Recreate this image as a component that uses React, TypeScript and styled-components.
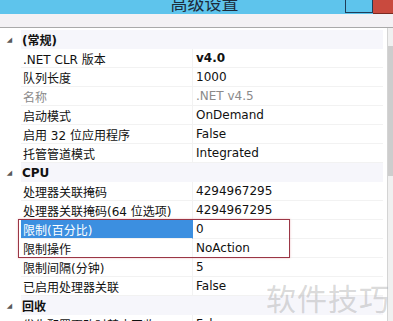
import React, { FC } from "react";
import styled, { createGlobalStyle } from "styled-components";

interface Prop {
  name: string;
  value?: string;
  bold?: boolean;
  dim?: boolean;
  selected?: boolean;
}

interface Section {
  title: string;
  props: Prop[];
}

const sections: Section[] = [
  {
    title: "(常规)",
    props: [
      { name: ".NET CLR 版本", value: "v4.0", bold: true },
      { name: "队列长度", value: "1000" },
      { name: "名称", value: ".NET v4.5", dim: true },
      { name: "启动模式", value: "OnDemand" },
      { name: "启用 32 位应用程序", value: "False" },
      { name: "托管管道模式", value: "Integrated" },
    ],
  },
  {
    title: "CPU",
    props: [
      { name: "处理器关联掩码", value: "4294967295" },
      { name: "处理器关联掩码(64 位选项)", value: "4294967295" },
      { name: "限制(百分比)", value: "0", selected: true },
      { name: "限制操作", value: "NoAction" },
      { name: "限制间隔(分钟)", value: "5" },
      { name: "已启用处理器关联", value: "False" },
    ],
  },
  {
    title: "回收",
    props: [{ name: "发生配置更改时禁止回收", value: "False" }],
  },
];

const GlobalStyle = createGlobalStyle`
  body {
    margin: 0;
    background: #ffffff;
    font-family: "DejaVu Sans", "Noto Sans CJK SC", sans-serif;
    overflow: hidden;
  }
`;

const Row: FC<{ prop: Prop }> = ({ prop }) => (
  <PropRow>
    <Gutter />
    <NameCell $selected={prop.selected} $dim={prop.dim}>
      {prop.name}
    </NameCell>
    <ValueCell $bold={prop.bold} $dim={prop.dim} $selected={prop.selected}>
      {prop.value}
    </ValueCell>
  </PropRow>
);

const App: FC = () => {
  return (
    <Window>
      <GlobalStyle />
      <TitleBar>
        <Title>高级设置</Title>
        <TitleButtons>
          <MaxButton />
          <CloseButton />
        </TitleButtons>
      </TitleBar>
      <Toolbar />
      <Body>
        <Grid>
          {sections.map((s) => {
            const rows = s.props;
            return (
              <React.Fragment key={s.title}>
                <CategoryRow>
                  <Gutter>
                    <Toggle>◢</Toggle>
                  </Gutter>
                  <CategoryTitle>{s.title}</CategoryTitle>
                </CategoryRow>
                {s.title === "CPU" ? (
                  <>
                    {rows.slice(0, 2).map((p) => (
                      <Row key={p.name} prop={p} />
                    ))}
                    <Highlight>
                      {rows.slice(2, 4).map((p) => (
                        <Row key={p.name} prop={p} />
                      ))}
                    </Highlight>
                    {rows.slice(4).map((p) => (
                      <Row key={p.name} prop={p} />
                    ))}
                  </>
                ) : (
                  rows.map((p) => <Row key={p.name} prop={p} />)
                )}
              </React.Fragment>
            );
          })}
        </Grid>
        <Scrollbar>
          <ScrollThumb />
        </Scrollbar>
      </Body>
      <Watermark>软件技巧</Watermark>
    </Window>
  );
};

export default App;

const Window = styled.div`
  position: relative;
  width: 393px;
  height: 321px;
  overflow: hidden;
  background: #ffffff;
`;

const TitleBar = styled.div`
  height: 14px;
  background: #5ec4ec;
  display: flex;
  justify-content: center;
  position: relative;
  overflow: hidden;
`;

const Title = styled.div`
  font-family: "Noto Sans CJK SC", sans-serif;
  font-size: 17px;
  line-height: 17px;
  margin-top: -6px;
  margin-left: 16px;
  color: #1d2b3a;
`;

const TitleButtons = styled.div`
  position: absolute;
  right: 0;
  top: 0;
  display: flex;
  height: 14px;
`;

const MaxButton = styled.div`
  width: 26px;
  height: 12px;
  border: 1px solid #1f3d58;
  border-top: none;
  background: #5ec4ec;
`;

const CloseButton = styled.div`
  width: 20px;
  height: 13px;
  background: #c94a3e;
  border-bottom: 1px solid #7a2a22;
`;

const Toolbar = styled.div`
  height: 13px;
  background: #f3f1f4;
  border-bottom: 1px solid #a9a9a9;
`;

const Body = styled.div`
  display: flex;
  height: 307px;
`;

const Grid = styled.div`
  flex: 1;
  display: flex;
  flex-direction: column;
  padding-top: 2px;
  font-size: 12px;
`;

const PropRow = styled.div`
  display: grid;
  grid-template-columns: 21px 171px 1fr;
  height: 19px;
  align-items: stretch;
`;

const CategoryRow = styled.div`
  display: grid;
  grid-template-columns: 21px 1fr;
  height: 19px;
  background: #f6f6fb;
  margin-right: 4px;
`;

const Gutter = styled.div`
  background: #ffffff;
  display: flex;
  align-items: center;
  justify-content: center;
`;

const Toggle = styled.span`
  font-size: 7px;
  color: #5a5a5a;
  margin-left: -2px;
`;

const CategoryTitle = styled.div`
  font-family: "DejaVu Sans", "Noto Sans CJK SC", sans-serif;
  font-weight: bold;
  color: #111;
  display: flex;
  align-items: center;
  padding-left: 1px;
`;

const NameCell = styled.div<{ $selected?: boolean; $dim?: boolean }>`
  display: flex;
  align-items: center;
  padding-left: 2px;
  white-space: nowrap;
  overflow: hidden;
  color: ${(p) => (p.$selected ? "#ffffff" : p.$dim ? "#8a8a8a" : "#111111")};
  background: ${(p) => (p.$selected ? "#3c8fe0" : "#ffffff")};
  border-bottom: 1px solid #f2f2f2;
`;

const ValueCell = styled.div<{
  $bold?: boolean;
  $dim?: boolean;
  $selected?: boolean;
}>`
  display: flex;
  align-items: center;
  padding-left: 3px;
  margin-right: 4px;
  font-weight: ${(p) => (p.$bold ? "bold" : "normal")};
  color: ${(p) => (p.$dim ? "#8a8a8a" : "#111111")};
  border-left: 1px solid ${(p) => (p.$selected ? "#3c8fe0" : "#f2f2f2")};
  border-bottom: 1px solid #f2f2f2;
`;

const Highlight = styled.div`
  position: relative;

  &::after {
    content: "";
    position: absolute;
    left: 18px;
    top: -1px;
    width: 270px;
    bottom: 0;
    border: 1px solid #9b3645;
    box-shadow: 0 0 2px rgba(220, 120, 130, 0.5);
    pointer-events: none;
  }
`;

const Scrollbar = styled.div`
  width: 5px;
  border-left: 1px solid #d4d4d4;
  background: #f0f0f0;
  display: flex;
  flex-direction: column;
`;

const ScrollThumb = styled.div`
  margin-top: 18px;
  height: 130px;
  background: #cdcdcd;
`;

const Watermark = styled.div`
  position: absolute;
  right: 3px;
  top: 275px;
  font-family: "Noto Sans CJK SC", sans-serif;
  font-size: 30px;
  letter-spacing: 1px;
  color: rgba(160, 160, 160, 0.4);
  pointer-events: none;
`;
